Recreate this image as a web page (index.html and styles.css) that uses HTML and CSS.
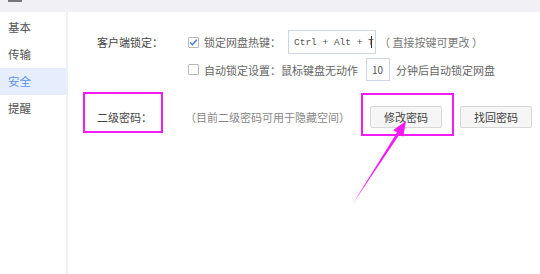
FILE: index.html
```html
<!DOCTYPE html>
<html lang="zh-CN">
<head>
<meta charset="UTF-8">
<meta name="viewport" content="width=device-width, initial-scale=1.0">
<title>设置 - 安全</title>
<link rel="stylesheet" href="styles.css">
</head>
<body>
<div class="titlebar"><span class="title-mark"></span></div>

<div class="window">
<div class="sidebar">
<div class="nav-item">基本</div>
<div class="nav-item">传输</div>
<div class="nav-item active">安全</div>
<div class="nav-item">提醒</div>
</div>

<div class="content">
<div class="row row-first">
<div class="label">客户端锁定：</div>
<div class="field">
<span class="check checked">
<svg width="11" height="11" viewBox="0 0 11 11"><path d="M2.2 5.6 L4.4 7.8 L8.8 2.8" fill="none" stroke="#3a7be0" stroke-width="1.4"/></svg>
</span>
<span class="opt">锁定网盘热键：</span>
<span class="input hotkey">Ctrl + Alt + T<i class="caret"></i></span>
<span class="hint">（ 直接按键可更改 ）</span>
</div>
</div>

<div class="row row-second">
<div class="label"></div>
<div class="field">
<span class="check"></span>
<span class="opt">自动锁定设置：鼠标键盘无动作</span>
<span class="input minutes">10</span>
<span class="opt after">分钟后自动锁定网盘</span>
</div>
</div>

<div class="row row-third">
<div class="label">二级密码：</div>
<div class="field">
<span class="desc">（目前二级密码可用于隐藏空间）</span>
<button class="btn first">修改密码</button>
<button class="btn">找回密码</button>
</div>
</div>
</div>
</div>

<!-- annotation drawn on top of the screenshot -->
<svg class="marks" width="540" height="274" viewBox="0 0 540 274">
<rect x="84" y="93" width="78" height="39" fill="none" stroke="#f41cf4" stroke-width="2"/>
<rect x="362" y="94" width="91" height="41" fill="none" stroke="#f41cf4" stroke-width="2"/>
<polygon points="352,205 397,132.6 393.3,130.1 406,121 403.3,136.7 399.6,134.2" fill="#f41cf4"/>
</svg>
</body>
</html>
```

FILE: styles.css
```css
body {
font-family: "Noto Sans CJK SC", "Noto Sans", sans-serif;
font-size: 11px;
margin: 0;
padding: 0;
background-color: #fff;
color: #444;
width: 540px;
height: 274px;
overflow: hidden;
position: relative;
}
.titlebar {
height: 12px;
background-color: #f0f0f5;
position: relative;
}
.title-mark {
display: block;
width: 14px;
height: 2px;
margin-left: 8px;
background-color: #777;
}
.window {
display: flex;
height: 262px;
}
.sidebar {
width: 66px;
border-right: 2px solid #f0f0f0;
padding-top: 2px;
}
.nav-item {
height: 27px;
line-height: 27px;
padding-left: 8px;
font-size: 11.5px;
color: #555;
}
.nav-item.active {
background-color: #e6edfc;
color: #5b93f2;
}
.content {
flex: 1;
padding: 18px 0 0 29px;
}
.row {
display: grid;
grid-template-columns: 91px 1fr;
align-items: center;
}
.row-first {
height: 24px;
}
.row-second {
height: 23px;
margin-top: 4px;
}
.row-third {
height: 22px;
margin-top: 25px;
}
.label {
color: #444;
white-space: nowrap;
}
.field {
display: flex;
align-items: center;
white-space: nowrap;
}
.check {
width: 9px;
height: 9px;
border: 1px solid #b8b8b8;
border-radius: 1px;
background-color: #fff;
margin-right: 5px;
position: relative;
}
.check svg {
position: absolute;
left: -1px;
top: -1px;
}
.opt {
color: #666;
}
.input {
border: 1px solid #cdd6e4;
background-color: #fff;
color: #555;
display: inline-flex;
align-items: center;
box-sizing: border-box;
}
.hotkey {
width: 88px;
height: 24px;
margin-left: 7px;
padding-left: 5px;
font-family: "Liberation Mono", "DejaVu Sans Mono", monospace;
font-size: 9.5px;
}
.caret {
display: inline-block;
width: 1px;
height: 12px;
background-color: #333;
margin-left: -3px;
}
.hint {
color: #777;
margin-left: 3px;
}
.minutes {
width: 24px;
height: 23px;
margin-left: 8px;
padding-left: 5px;
font-size: 10px;
}
.after {
margin-left: 6px;
}
.desc {
color: #888;
margin-left: -3px;
}
.btn {
font-family: "Noto Sans CJK SC", "Noto Sans", sans-serif;
font-size: 11px;
color: #444;
width: 72px;
height: 22px;
padding: 0;
border: 1px solid #d8d8d8;
border-radius: 2px;
background-color: #f6f6f6;
margin-left: 18px;
}
.btn.first {
margin-left: 20px;
}
.marks {
position: absolute;
left: 0;
top: 0;
pointer-events: none;
}
```
